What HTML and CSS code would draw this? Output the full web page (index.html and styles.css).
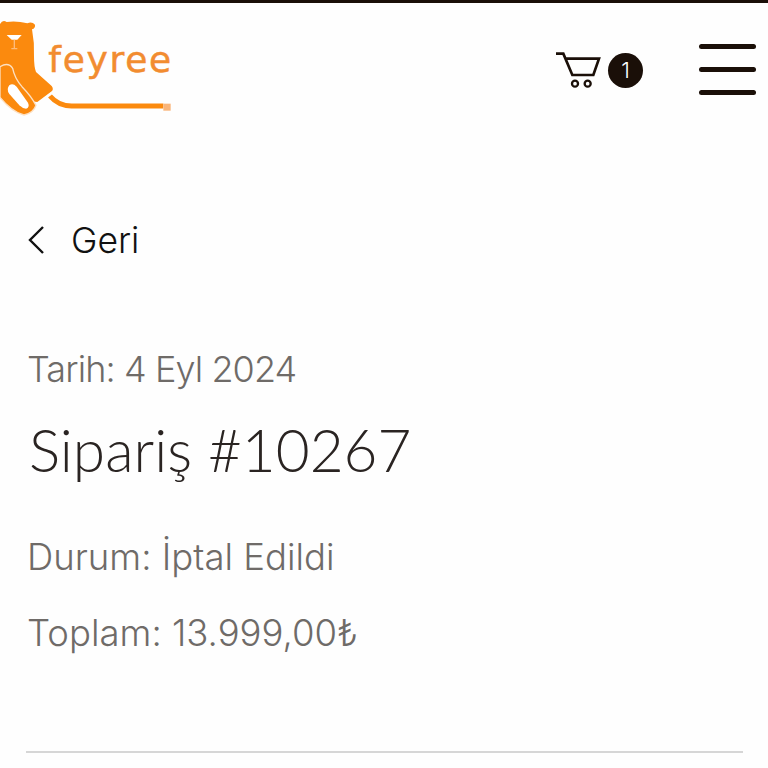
FILE: index.html
```html
<!DOCTYPE html>
<html lang="tr">
<head>
  <meta charset="UTF-8" />
  <title>Sipariş #10267</title>
  <link rel="stylesheet" href="styles.css">
</head>
<body>
  <div class="topline"></div>
  <div class="navbar">
    <a href="#" class="logo">
      <svg width="200" height="120" viewBox="0 9 600 360">
        <path d="M150 288 Q175 318 215 318 H490" fill="none" stroke="#fb8a0e" stroke-width="15"/>
        <path d="M490 311 H512 V332 H490 Z" fill="#f9b57a"/>
        <path d="M0 72 Q8 58 20 66 Q50 62 82 70 Q96 64 105 74 Q107 84 96 88 Q104 130 102 170 Q102 200 108 216 L155 258 Q162 268 155 274 L112 306 L60 300 L0 200 Z" fill="#fb8a0e"/>
        <path d="M0 200 Q25 185 38 205 Q44 235 66 260 Q95 290 108 316 Q100 340 72 345 Q35 335 0 292 Z" fill="#fb8a0e" stroke="#fde0c2" stroke-width="4"/>
        <path d="M28 256 Q38 248 50 260 L84 308 Q90 322 78 326 Q68 326 58 316 L28 282 Q18 268 28 256 Z" fill="#fff"/>
        <path d="M20 105 H65 L52 119 H35 Z" fill="#fff"/>
        <path d="M43 119 V145 M34 146 H52" stroke="#fdbb7c" stroke-width="4" fill="none"/>
        <text x="145" y="215" class="logo-text">feyree</text>
      </svg>
    </a>
    <div class="nav-right">
      <div class="cart">
        <svg width="46" height="38" viewBox="45 150 138 114" fill="none" stroke="#1a0f08">
          <path d="M48 158 H70 L97 222 H160 L177 173 H76" stroke-width="8"/>
          <circle cx="105" cy="248" r="9" stroke-width="7"/>
          <circle cx="143" cy="248" r="9" stroke-width="7"/>
        </svg>
        <span class="badge">1</span>
      </div>
      <button class="burger"><span></span><span></span><span></span></button>
    </div>
  </div>

  <div class="content">
    <a href="#" class="back">
      <svg width="16" height="28" viewBox="0 0 16 28" fill="none" stroke="#111" stroke-width="2.4"><path d="M15 1 L2 14 L15 27"/></svg>
      <span>Geri</span>
    </a>
    <div class="date">Tarih: 4 Eyl 2024</div>
    <h1>Sipariş #10267</h1>
    <div class="info status">Durum: İptal Edildi</div>
    <div class="info">Toplam: 13.999,00₺</div>
    <hr class="divider" />
  </div>
</body>
</html>
```

FILE: styles.css
```css
html, body {
  height: 768px;
  overflow: hidden;
}

body {
  margin: 0;
  background-color: #fefefe;
  color: #6f6b68;
  font-family: 'Inter', sans-serif;
}

a {
  text-decoration: none;
  color: inherit;
}

.topline {
  height: 3px;
  background-color: #1a0f08;
}

.navbar {
  display: flex;
  justify-content: space-between;
  align-items: flex-start;
  height: 218px;
  padding-right: 12px;
}

.logo {
  display: block;
  height: 120px;
}

.logo-text {
  font-family: 'DejaVu Sans', sans-serif;
  font-size: 108px;
  letter-spacing: 5px;
  fill: #f28c30;
  stroke: #f28c30;
  stroke-width: 1.5px;
}

.nav-right {
  display: flex;
  align-items: flex-start;
  gap: 56px;
  margin-top: 41px;
}

.cart {
  display: flex;
  align-items: center;
  gap: 7px;
  margin-top: 7px;
}

.badge {
  display: flex;
  align-items: center;
  justify-content: center;
  width: 35px;
  height: 35px;
  border-radius: 50%;
  background-color: #1a0f08;
  color: #fff;
  font-size: 22px;
  font-weight: 300;
}

.burger {
  display: flex;
  flex-direction: column;
  gap: 18px;
  width: 57px;
  padding: 0;
  border: none;
  background: none;
}

.burger span {
  display: block;
  width: 100%;
  height: 5px;
  border-radius: 3px;
  background-color: #1a0f08;
}

.content {
  padding: 0 25px 0 26px;
}

.back {
  display: flex;
  align-items: center;
  gap: 27px;
  padding-left: 2px;
  height: 38px;
  color: #111;
  font-size: 35.5px;
  font-weight: 300;
}

.date {
  margin-top: 88px;
  padding-left: 1px;
  font-size: 36px;
  letter-spacing: -0.9px;
  font-weight: 300;
  line-height: 44px;
}

h1 {
  margin: 22px 0 0;
  padding-left: 3px;
  color: #2a2422;
  font-family: 'Lato', sans-serif;
  font-size: 58.5px;
  font-weight: 300;
  line-height: 72px;
}

.info {
  padding-left: 1px;
  font-size: 36.5px;
  font-weight: 300;
  line-height: 44px;
  margin-top: 32px;
}

.status {
  margin-top: 50px;
}

.divider {
  margin: 96px 0 0;
  height: 2px;
  border: none;
  background-color: #d6d6d6;
}
```
